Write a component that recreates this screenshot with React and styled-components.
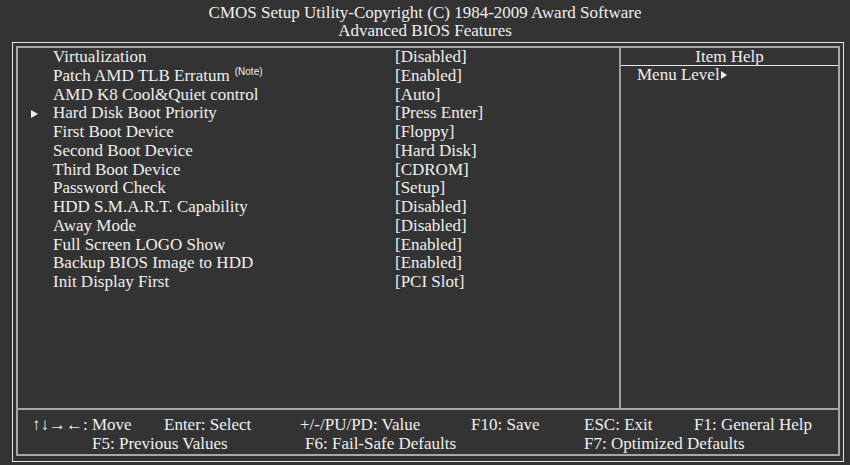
import React from 'react'
import styled, { createGlobalStyle } from 'styled-components'

const GlobalStyle = createGlobalStyle`
  html, body {
    margin: 0;
    padding: 0;
    background: #333333;
  }
  body {
    width: 850px;
    height: 465px;
    overflow: hidden;
    font-family: "Liberation Serif", "Times New Roman", serif;
    color: #f0f0f0;
  }
`;

const Screen = styled.div`
  width: 850px;
  height: 465px;
  background: #333333;
`;

const Header = styled.div`
  padding-top: 4px;
  margin-bottom: 2px;
  text-align: center;
  font-size: 17px;
  line-height: 18px;
`;

const Outer = styled.div`
  margin-left: 12px;
  width: 832px;
  height: 420px;
  box-sizing: border-box;
  border: 1px solid #e6e6e6;
  padding: 3px 3px 5px 3px;
`;

const Inner = styled.div`
  height: 100%;
  box-sizing: border-box;
  border: 2px solid #a8a8a8;
  display: flex;
  flex-direction: column;
`;

const Main = styled.div`
  flex: 1;
  display: grid;
  grid-template-columns: 603px 1fr;
`;

const Settings = styled.div`
  border-right: 2px solid #a0a0a0;
  font-size: 17px;
`;

const Row = styled.div`
  display: grid;
  grid-template-columns: 35px 342px 1fr;
  height: 18.75px;
  line-height: 18.75px;
  white-space: nowrap;
`;

const Pointer = styled.span`
  display: flex;
  align-items: center;
  padding-left: 13px;
`;

const Triangle = styled.span`
  width: 0;
  height: 0;
  border-top: ${p => p.$h / 2}px solid transparent;
  border-bottom: ${p => p.$h / 2}px solid transparent;
  border-left: ${p => p.$w}px solid #f0f0f0;
  display: inline-block;
  margin-left: ${p => p.$gap || 0}px;
`;

const Note = styled.sup`
  font-family: "Liberation Sans", Arial, sans-serif;
  font-size: 10px;
  vertical-align: 6px;
  line-height: 0;
  margin-left: 5px;
`;

const Help = styled.div`
  font-size: 17px;
`;

const HelpTitle = styled.div`
  text-align: center;
  height: 17px;
  line-height: 18px;
  border-bottom: 1px solid #e6e6e6;
`;

const HelpText = styled.div`
  padding-left: 16px;
  line-height: 18.75px;
  display: flex;
  align-items: center;
`;

const Footer = styled.div`
  border-top: 2px solid #a8a8a8;
  height: 46px;
  padding-top: 6px;
  box-sizing: border-box;
  font-size: 17px;
  line-height: 18.75px;
`;

const KeyRow = styled.div`
  display: flex;
  padding-left: ${p => p.$indent}px;
  white-space: nowrap;
`;

const Key = styled.span`
  width: ${p => (p.$w ? p.$w + 'px' : 'auto')};
  flex: none;
`;

const settings = [
  { label: 'Virtualization', value: '[Disabled]' },
  { label: 'Patch AMD TLB Erratum', value: '[Enabled]', note: true },
  { label: 'AMD K8 Cool&Quiet control', value: '[Auto]' },
  { label: 'Hard Disk Boot Priority', value: '[Press Enter]', sub: true },
  { label: 'First Boot Device', value: '[Floppy]' },
  { label: 'Second Boot Device', value: '[Hard Disk]' },
  { label: 'Third Boot Device', value: '[CDROM]' },
  { label: 'Password Check', value: '[Setup]' },
  { label: 'HDD S.M.A.R.T. Capability', value: '[Disabled]' },
  { label: 'Away Mode', value: '[Disabled]' },
  { label: 'Full Screen LOGO Show', value: '[Enabled]' },
  { label: 'Backup BIOS Image to HDD', value: '[Enabled]' },
  { label: 'Init Display First', value: '[PCI Slot]' },
];

const App = () => {
  return (
    <Screen>
      <GlobalStyle />
      <Header>
        <div>CMOS Setup Utility-Copyright (C) 1984-2009 Award Software</div>
        <div>Advanced BIOS Features</div>
      </Header>
      <Outer>
        <Inner>
          <Main>
            <Settings>
              {settings.map(s => (
                <Row key={s.label}>
                  <Pointer>{s.sub && <Triangle $h={9} $w={7} />}</Pointer>
                  <span>
                    {s.label}
                    {s.note && <Note>(Note)</Note>}
                  </span>
                  <span>{s.value}</span>
                </Row>
              ))}
            </Settings>
            <Help>
              <HelpTitle>Item Help</HelpTitle>
              <HelpText>
                Menu Level<Triangle $h={9} $w={6} $gap={1} />
              </HelpText>
            </Help>
          </Main>
          <Footer>
            <KeyRow $indent={14}>
              <Key $w={132}>↑↓→←: Move</Key>
              <Key $w={136}>Enter: Select</Key>
              <Key $w={171}>+/-/PU/PD: Value</Key>
              <Key $w={113}>F10: Save</Key>
              <Key $w={110}>ESC: Exit</Key>
              <Key>F1: General Help</Key>
            </KeyRow>
            <KeyRow $indent={74}>
              <Key $w={213}>F5: Previous Values</Key>
              <Key $w={279}>F6: Fail-Safe Defaults</Key>
              <Key>F7: Optimized Defaults</Key>
            </KeyRow>
          </Footer>
        </Inner>
      </Outer>
    </Screen>
  )
}

export default App
